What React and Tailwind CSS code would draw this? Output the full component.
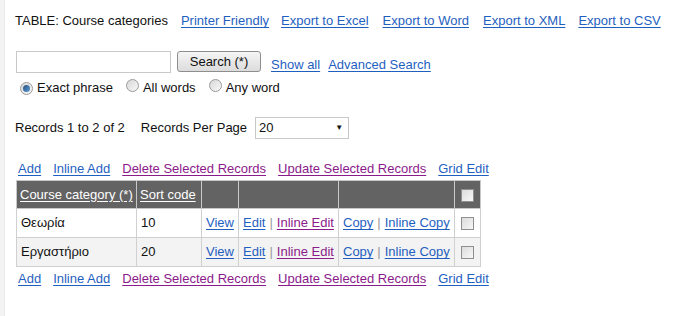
import React from "react";

const blue = "text-[#1f5fbf] underline underline-offset-2";
const purple = "text-[#8b1a8b] underline underline-offset-2";

const Box = () => (
  <span className="inline-block w-[13px] h-[13px] border border-[#8f8f8f] bg-gradient-to-br from-[#dcdcdc] to-[#f7f7f7] align-middle" />
);

const Radio = ({ on }) => (
  <span className="inline-flex w-[13px] h-[13px] rounded-full border border-[#9a9a9a] bg-gradient-to-br from-[#d8d8d8] to-[#f8f8f8] items-center justify-center">
    {on && <span className="w-[7px] h-[7px] rounded-full bg-gradient-to-br from-[#2a4f7f] to-[#5b9fd6]" />}
  </span>
);

const ActionLinks = () => (
  <div className="flex items-center h-[20px] pl-[18px]">
    <a className={blue}>Add</a>
    <a className={`${blue} ml-[12px]`}>Inline Add</a>
    <a className={`${purple} ml-[12px]`}>Delete Selected Records</a>
    <a className={`${purple} ml-[12px]`}>Update Selected Records</a>
    <a className={`${blue} ml-[12px]`}>Grid Edit</a>
  </div>
);

const rows = [
  { name: "Θεωρία", code: "10", bg: "bg-white" },
  { name: "Εργαστήριο", code: "20", bg: "bg-[#f3f3f3]" },
];

export default function App() {
  return (
    <div
      className="w-[673px] h-[316px] bg-white flex text-[13px] text-[#111]"
      style={{ fontFamily: '"Liberation Sans", Arial, sans-serif' }}
    >
      {/* left rail */}
      <div className="w-[5px] bg-[#f3f3f3] border-r border-[#ebebeb]" />
      <div className="flex-1 pl-[10px]">
        <div className="flex items-center h-[20px] mt-[11px]">
          <span>TABLE: Course categories</span>
          <a className={`${blue} ml-[13px]`}>Printer Friendly</a>
          <a className={`${blue} ml-[12px]`}>Export to Excel</a>
          <a className={`${blue} ml-[14px]`}>Export to Word</a>
          <a className={`${blue} ml-[14px]`}>Export to XML</a>
          <a className={`${blue} ml-[13px]`}>Export to CSV</a>
        </div>

        <div className="flex items-center mt-[19px] h-[23px]">
          <input className="w-[155px] h-[22px] ml-[1px] border border-[#c9c9c9] bg-white" />
          <button className="ml-[6px] w-[84px] h-[21px] rounded-[3px] border border-[#8e8e8e] bg-gradient-to-b from-[#f5f5f5] to-[#dcdcdc] text-[13px]">
            Search (*)
          </button>
          <a className={`${blue} ml-[10px] mt-[6px]`}>Show all</a>
          <a className={`${blue} ml-[8px] mt-[6px]`}>Advanced Search</a>
        </div>

        <div className="flex items-center mt-[5px] h-[20px] pl-[5px]">
          <Radio on />
          <span className="ml-[4px]">Exact phrase</span>
          <span className="ml-[13px]"><Radio /></span>
          <span className="ml-[4px]">All words</span>
          <span className="ml-[13px]"><Radio /></span>
          <span className="ml-[4px]">Any word</span>
        </div>

        <div className="flex items-center mt-[18px] h-[24px]">
          <span>Records 1 to 2 of 2</span>
          <span className="ml-[16px]">Records Per Page</span>
          <div className="ml-[8px] w-[94px] h-[22px] border border-[#c9c9c9] flex items-center justify-between px-[3px] bg-white">
            <span>20</span>
            <span className="text-[8px] mr-[2px]">▼</span>
          </div>
        </div>

        <div className="mt-[19px] -ml-[15px]">
          <ActionLinks />
        </div>

        <table className="border-collapse ml-[1px] mt-[1px]">
          <thead>
            <tr className="h-[28px] bg-[#636363] text-white">
              <th className="w-[120px] border border-[#c8c8c8] text-left font-normal px-[3px]">
                <a className="underline underline-offset-2">Course category (*)</a>
              </th>
              <th className="w-[65px] border border-[#c8c8c8] text-left font-normal px-[3px]">
                <a className="underline underline-offset-2">Sort code</a>
              </th>
              <th className="w-[37px] border border-[#c8c8c8]" />
              <th className="w-[100px] border border-[#c8c8c8]" />
              <th className="w-[115px] border border-[#c8c8c8]" />
              <th className="w-[21px] border border-[#c8c8c8] text-center px-[6px]">
                <Box />
              </th>
            </tr>
          </thead>
          <tbody>
            {rows.map((r) => (
              <tr key={r.name} className={`h-[29px] ${r.bg}`}>
                <td className="border border-[#d0d0d0] px-[4px]">{r.name}</td>
                <td className="border border-[#d0d0d0] px-[4px]">{r.code}</td>
                <td className="border border-[#d0d0d0] px-[4px]">
                  <a className={blue}>View</a>
                </td>
                <td className="border border-[#d0d0d0] px-[4px] whitespace-nowrap">
                  <a className={blue}>Edit</a>
                  <span className="text-[#999] mx-[4px]">|</span>
                  <a className={purple}>Inline Edit</a>
                </td>
                <td className="border border-[#d0d0d0] px-[4px] whitespace-nowrap">
                  <a className={blue}>Copy</a>
                  <span className="text-[#999] mx-[4px]">|</span>
                  <a className={blue}>Inline Copy</a>
                </td>
                <td className="border border-[#d0d0d0] text-center px-[6px]">
                  <Box />
                </td>
              </tr>
            ))}
          </tbody>
        </table>

        <div className="mt-[2px] -ml-[15px]">
          <ActionLinks />
        </div>
      </div>
    </div>
  );
}
